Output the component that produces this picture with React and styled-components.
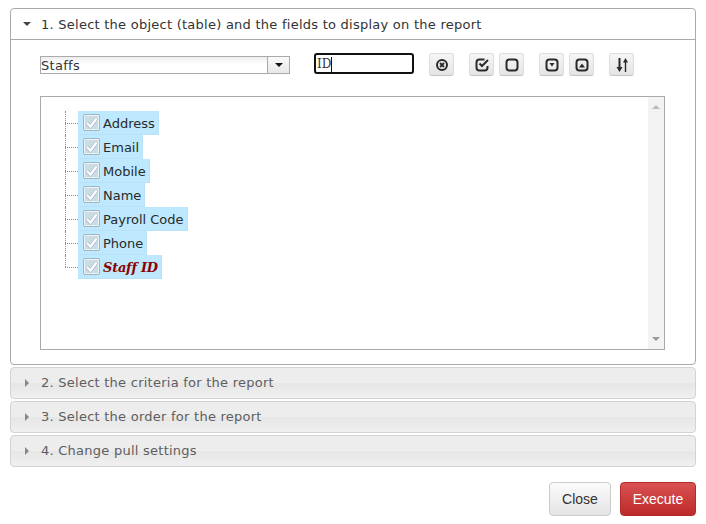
import React from "react";
import styled, { createGlobalStyle } from "styled-components";

const GlobalStyle = createGlobalStyle`
  html, body { margin: 0; padding: 0; background: #fff; }
  body { font-family: "DejaVu Sans", Verdana, sans-serif; font-size: 13px; color: #333; }
`;

const Page = styled.div`
  width: 706px;
  height: 524px;
  box-sizing: border-box;
  padding: 8px 10px 0 10px;
  overflow: hidden;
`;

const OpenPanel = styled.section`
  box-sizing: border-box;
  height: 357px;
  border: 1px solid #aaa;
  border-radius: 4px;
  background: #fff;
`;

const PanelHead = styled.div`
  box-sizing: border-box;
  height: 31px;
  display: flex;
  align-items: center;
  border-bottom: 1px solid #aaa;
  padding-left: 12px;
`;

const Title = styled.span`
  margin-left: 10px;
  letter-spacing: 0.25px;
  white-space: nowrap;
  color: ${(p) => (p.$muted ? "#5e5e5e" : "#333")};
`;

const PanelBody = styled.div`
  padding: 13px 29px 0 29px;
`;

const Toolbar = styled.div`
  display: flex;
  align-items: flex-start;
  height: 24px;
`;

const SelectBox = styled.div`
  box-sizing: border-box;
  width: 250px;
  height: 18px;
  margin-top: 3px;
  display: flex;
  border: 1px solid #aaa;
  background: linear-gradient(#eee, #fff 45%);
`;

const SelectValue = styled.div`
  flex: 1;
  line-height: 17px;
  letter-spacing: 0.3px;
  color: #333;
`;

const SelectArrow = styled.div`
  width: 21px;
  display: flex;
  align-items: center;
  justify-content: center;
  border-left: 1px solid #aaa;
  background: linear-gradient(#fafafa, #e8e8e8);
`;

const SearchBox = styled.div`
  box-sizing: border-box;
  width: 100px;
  height: 21px;
  margin-left: 24px;
  padding: 1px 0 0 1px;
  display: flex;
  align-items: center;
  border: 2px solid #111;
  border-radius: 3px;
  font-family: "DejaVu Serif", serif;
  font-size: 12px;
  color: #333;
`;

const Caret = styled.span`
  width: 1px;
  height: 15px;
  background: #111;
`;

const IconButton = styled.button`
  box-sizing: border-box;
  width: 25px;
  height: 23px;
  margin-left: ${(p) => p.$gap}px;
  padding: 0;
  display: flex;
  align-items: center;
  justify-content: center;
  border: 1px solid #ddd;
  border-bottom-color: #c4c4c4;
  border-radius: 3px;
  background: linear-gradient(#f6f6f6, #e4e4e4);
  color: #333;
`;

const TreeBox = styled.div`
  box-sizing: border-box;
  width: 625px;
  height: 254px;
  margin-top: 19px;
  display: flex;
  border: 1px solid #aaa;
`;

const TreeArea = styled.div`
  flex: 1;
  padding: 14px 0 0 24px;
`;

const TreeList = styled.ul`
  margin: 0;
  padding: 0;
  list-style: none;
`;

const TreeRow = styled.li`
  position: relative;
  display: flex;
  height: 24px;
  padding-left: 13px;

  &::before {
    content: "";
    position: absolute;
    left: 0;
    top: 0;
    height: ${(p) => (p.$last ? "12px" : "24px")};
    border-left: 1px dotted #888;
  }

  &::after {
    content: "";
    position: absolute;
    left: 0;
    top: 12px;
    width: 13px;
    border-top: 1px dotted #888;
  }
`;

const TreeItem = styled.div`
  box-sizing: border-box;
  height: 24px;
  display: flex;
  align-items: center;
  padding: 0 3px 0 5px;
  background: #bde8fd;
  border: 1px solid #b9e2f7;
  border-width: 0 1px 1px 0;
`;

const CheckBox = styled.span`
  box-sizing: border-box;
  width: 17px;
  height: 17px;
  display: flex;
  align-items: center;
  justify-content: center;
  border: 1px solid #a3b4bf;
  border-radius: 2px;
  background: #c9dce6;
  box-shadow: inset 0 0 0 1px #eef5f9;
`;

const Label = styled.span`
  margin: 2px 0 0 3px;
  white-space: nowrap;
  color: #2a2a2a;
`;

const KeyLabel = styled.span`
  margin: 2px 0 0 3px;
  font-family: "DejaVu Serif", serif;
  font-weight: bold;
  font-style: italic;
  font-size: 13px;
  letter-spacing: -0.25px;
  white-space: nowrap;
  color: #8b0000;
`;

const ScrollBar = styled.div`
  width: 16px;
  display: flex;
  flex-direction: column;
  justify-content: space-between;
  align-items: center;
  padding: 6px 0;
  background: #f3f3f3;
`;

const ClosedPanel = styled.section`
  box-sizing: border-box;
  height: 32px;
  margin-top: 2px;
  display: flex;
  align-items: center;
  padding: 0 0 1px 12px;
  border: 1px solid #d3d3d3;
  border-radius: 4px;
  background: linear-gradient(#ededed 0, #ededed 50%, #e6e6e6 52%, #f0f0f0 100%);
`;

const Footer = styled.div`
  display: flex;
  justify-content: flex-end;
  gap: 9px;
  margin-top: 15px;
`;

const ActionButton = styled.button`
  box-sizing: border-box;
  width: ${(p) => p.$width}px;
  height: 34px;
  padding: 0 0 1px 0;
  border-radius: 4px;
  border: 1px solid ${(p) => (p.$danger ? "#b32a2a" : "#ccc")};
  background: ${(p) =>
    p.$danger
      ? "linear-gradient(#d95252, #bd2a2a)"
      : "linear-gradient(#fbfbfb, #e4e4e4)"};
  color: ${(p) => (p.$danger ? "#fff" : "#333")};
  font-family: "Liberation Sans", Arial, sans-serif;
  font-size: 14px;
`;

const Triangle = ({ dir, color = "#555", size = 8 }) => {
  const points = {
    down: "0,2 8,2 4,6",
    right: "2,0 6,4 2,8",
    up: "0,6 8,6 4,2",
  }[dir];
  return (
    <svg width={size} height={size} viewBox="0 0 8 8">
      <polygon points={points} fill={color} />
    </svg>
  );
};

const Tick = () => (
  <svg width="15" height="15" viewBox="0 0 15 15">
    <path d="M3 8 L6.5 11.5 L12.5 3.5" fill="none" stroke="#9fb2bd" strokeWidth="3.4" />
    <path d="M3 8 L6.5 11.5 L12.5 3.5" fill="none" stroke="#fff" strokeWidth="2.2" />
  </svg>
);

const box = <rect x="2.5" y="2.5" width="11" height="11" rx="3" fill="none" stroke="#2a2a2a" strokeWidth="2" />;

const glyphs = {
  clear: (
    <>
      <circle cx="8" cy="8" r="5" fill="none" stroke="#2a2a2a" strokeWidth="2" />
      <path d="M6 6 L10 10 M10 6 L6 10" stroke="#2a2a2a" strokeWidth="1.8" />
    </>
  ),
  checkAll: (
    <>
      <path d="M13.5 9 V10.5 Q13.5 13.5 10.5 13.5 H5.5 Q2.5 13.5 2.5 10.5 V5.5 Q2.5 2.5 5.5 2.5 H10.5" fill="none" stroke="#2a2a2a" strokeWidth="2" />
      <path d="M5.5 6.5 L8 9 L14 3" fill="none" stroke="#2a2a2a" strokeWidth="2" />
    </>
  ),
  uncheckAll: box,
  collapse: (
    <>
      {box}
      <polygon points="5.5,6 10.5,6 8,9.5" fill="#2a2a2a" />
    </>
  ),
  expand: (
    <>
      {box}
      <polygon points="5,10.5 11,10.5 8,6.5" fill="#2a2a2a" />
    </>
  ),
  sort: (
    <>
      <path d="M5.5 1 V12" stroke="#2a2a2a" strokeWidth="2" />
      <polygon points="2.5,10 8.5,10 5.5,15" fill="#2a2a2a" />
      <path d="M11.5 15 V4" stroke="#2a2a2a" strokeWidth="1.4" />
      <polygon points="9,5.5 14,5.5 11.5,1" fill="#2a2a2a" />
    </>
  ),
};

const ToolIcon = ({ name }) => (
  <svg width="16" height="16" viewBox="0 0 16 16">
    {glyphs[name]}
  </svg>
);

const fields = ["Address", "Email", "Mobile", "Name", "Payroll Code", "Phone"];

const tools = [
  { name: "clear", gap: 15 },
  { name: "checkAll", gap: 15 },
  { name: "uncheckAll", gap: 5 },
  { name: "collapse", gap: 15 },
  { name: "expand", gap: 5 },
  { name: "sort", gap: 15 },
];

const closed = [
  "2. Select the criteria for the report",
  "3. Select the order for the report",
  "4. Change pull settings",
];

export default function App() {
  return (
    <Page>
      <GlobalStyle />
      <OpenPanel>
        <PanelHead>
          <Triangle dir="down" color="#444" />
          <Title>1. Select the object (table) and the fields to display on the report</Title>
        </PanelHead>
        <PanelBody>
          <Toolbar>
            <SelectBox>
              <SelectValue>Staffs</SelectValue>
              <SelectArrow>
                <Triangle dir="down" color="#111" />
              </SelectArrow>
            </SelectBox>
            <SearchBox>
              ID
              <Caret />
            </SearchBox>
            {tools.map((t) => (
              <IconButton key={t.name} $gap={t.gap}>
                <ToolIcon name={t.name} />
              </IconButton>
            ))}
          </Toolbar>
          <TreeBox>
            <TreeArea>
              <TreeList>
                {fields.map((f) => (
                  <TreeRow key={f}>
                    <TreeItem>
                      <CheckBox>
                        <Tick />
                      </CheckBox>
                      <Label>{f}</Label>
                    </TreeItem>
                  </TreeRow>
                ))}
                <TreeRow $last>
                  <TreeItem>
                    <CheckBox>
                      <Tick />
                    </CheckBox>
                    <KeyLabel>Staff ID</KeyLabel>
                  </TreeItem>
                </TreeRow>
              </TreeList>
            </TreeArea>
            <ScrollBar>
              <Triangle dir="up" color="#bbb" />
              <Triangle dir="down" color="#999" />
            </ScrollBar>
          </TreeBox>
        </PanelBody>
      </OpenPanel>
      {closed.map((title) => (
        <ClosedPanel key={title}>
          <Triangle dir="right" color="#888" />
          <Title $muted>{title}</Title>
        </ClosedPanel>
      ))}
      <Footer>
        <ActionButton $width={62}>Close</ActionButton>
        <ActionButton $width={76} $danger>Execute</ActionButton>
      </Footer>
    </Page>
  );
}
